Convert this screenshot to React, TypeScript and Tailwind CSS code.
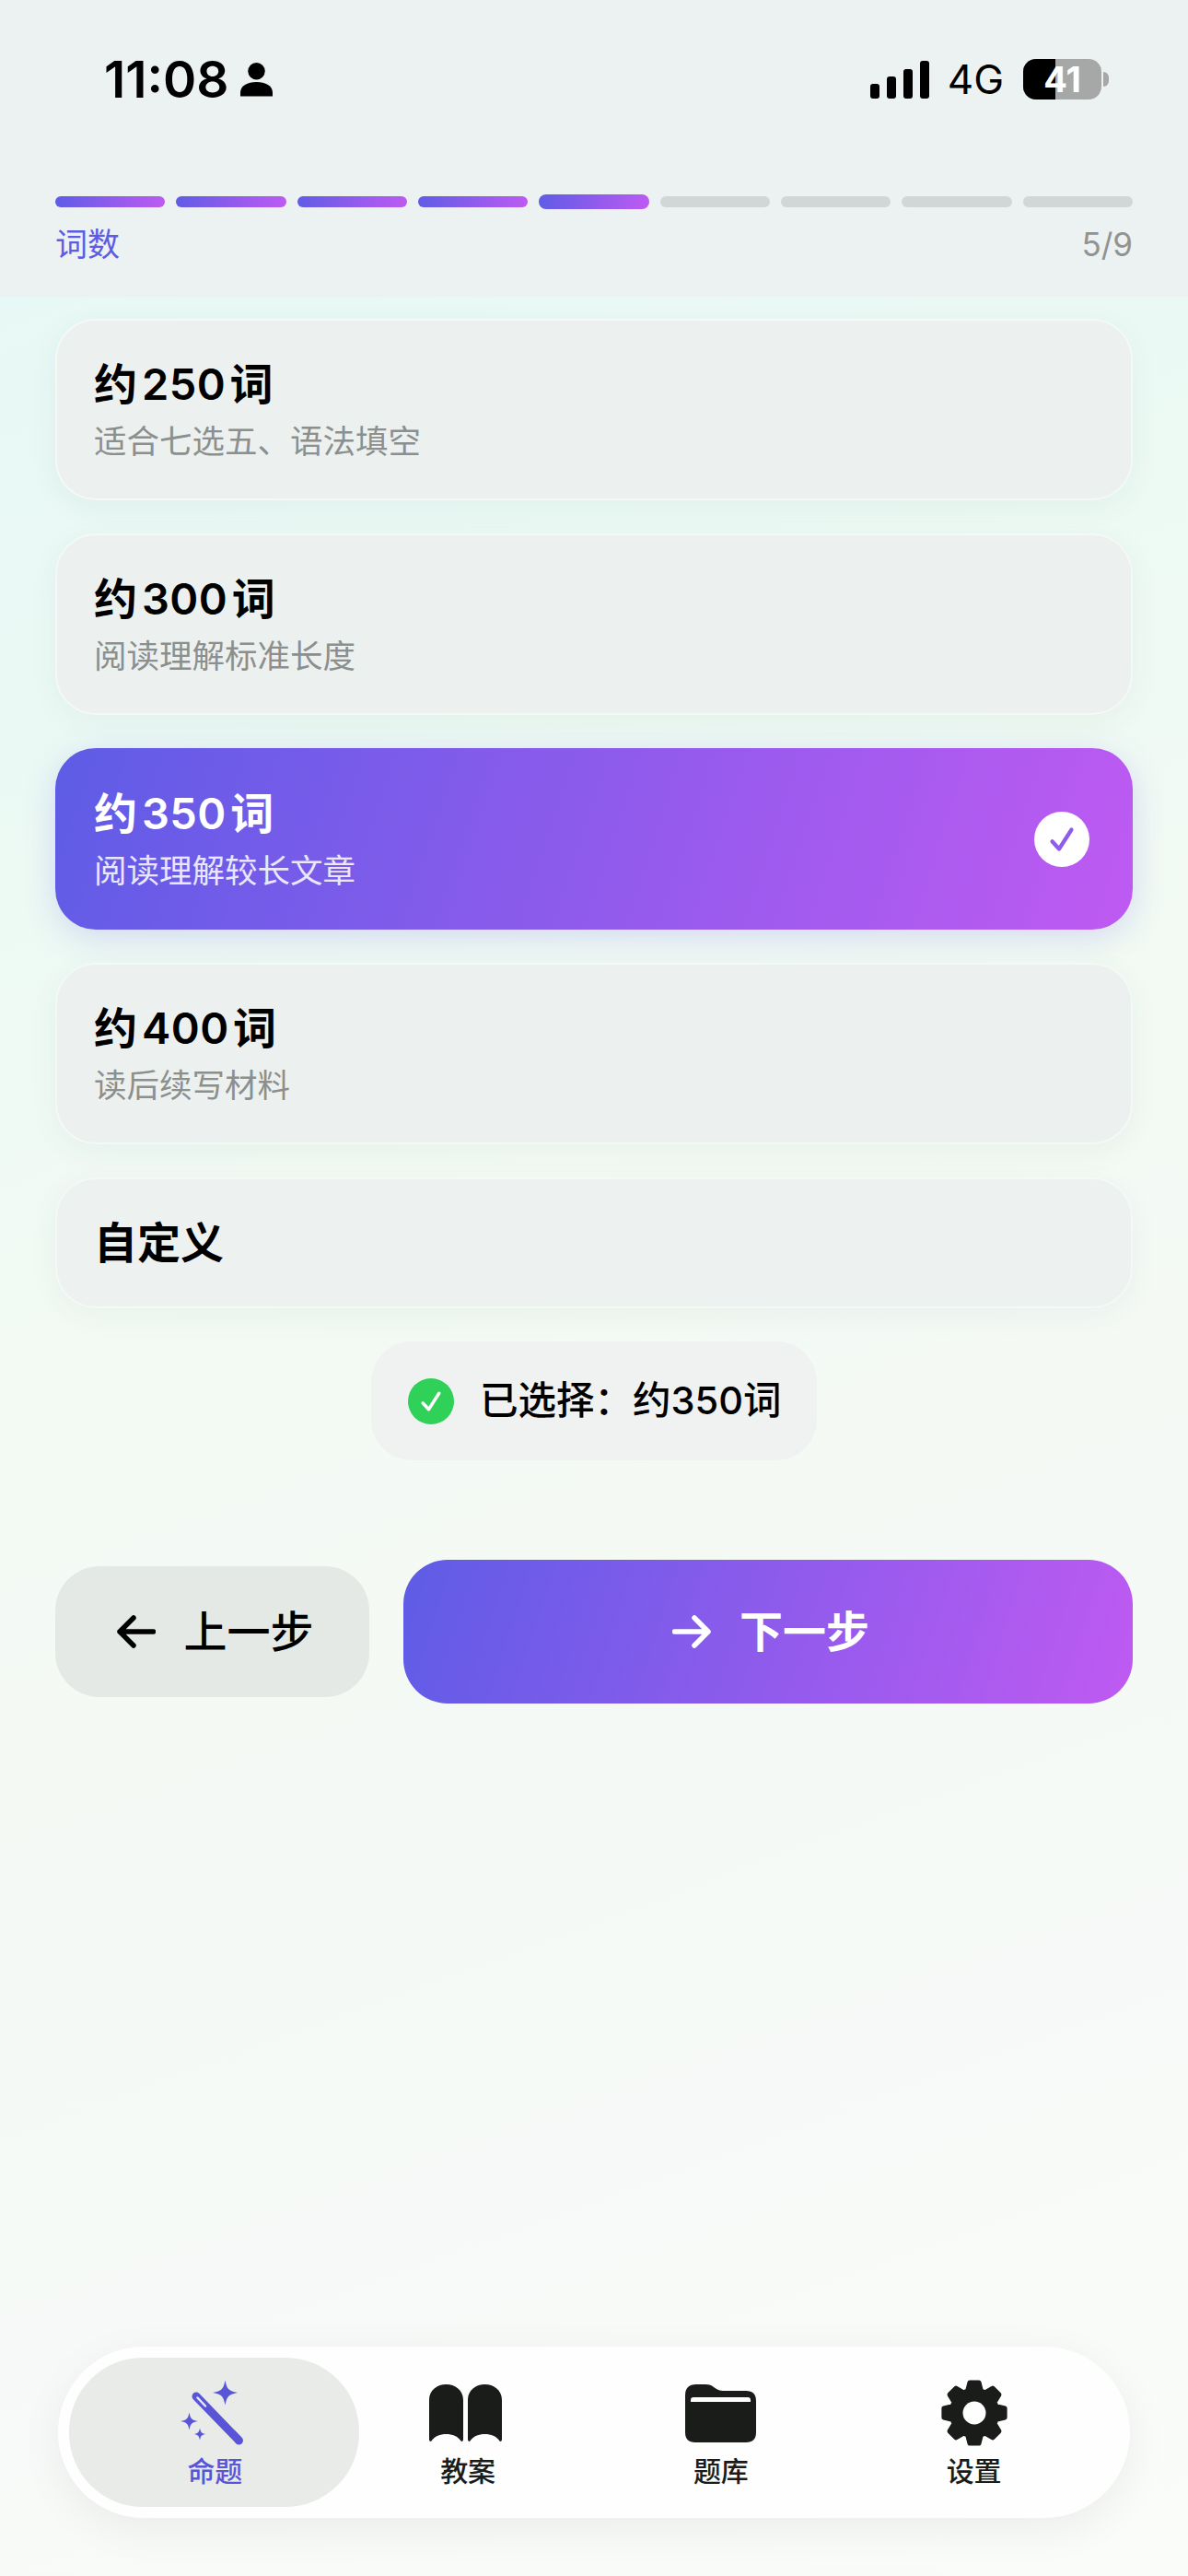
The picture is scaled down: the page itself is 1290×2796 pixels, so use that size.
import type { ReactNode } from 'react';

const brandGradient = 'bg-[linear-gradient(108deg,#5e5ce6,#bf5af2)]';

const options = [
  { title: '约\u200a250\u200a词', note: '适合七选五、语法填空' },
  { title: '约\u200a300\u200a词', note: '阅读理解标准长度' },
  { title: '约\u200a350\u200a词', note: '阅读理解较长文章', selected: true },
  { title: '约\u200a400\u200a词', note: '读后续写材料' },
];

function sparkle(cx: number, cy: number, r: number) {
  const k = r * 0.14;
  return `M${cx} ${cy - r}C${cx + k} ${cy - k * 2} ${cx + k * 2} ${cy - k} ${cx + r} ${cy}C${cx + k * 2} ${cy + k} ${cx + k} ${cy + k * 2} ${cx} ${cy + r}C${cx - k} ${cy + k * 2} ${cx - k * 2} ${cy + k} ${cx - r} ${cy}C${cx - k * 2} ${cy - k} ${cx - k} ${cy - k * 2} ${cx} ${cy - r}Z`;
}

function gearPath() {
  const points: string[] = [];
  for (let i = 0; i < 8; i++) {
    const a = (i * Math.PI) / 4 - Math.PI / 2;
    const at = (r: number, da: number) => `${(36 + r * Math.cos(a + da)).toFixed(2)} ${(36 + r * Math.sin(a + da)).toFixed(2)}`;
    points.push(at(25, -0.3), at(33.5, -0.15), at(33.5, 0.15), at(25, 0.3));
  }
  return `M${points.join('L')}Z`;
}

function WandIcon() {
  return (
    <svg aria-hidden="true" width="72" height="72" viewBox="0 0 72 72" className="-translate-x-[3px] text-[#5856d6]">
      <path d={sparkle(50.5, 14, 13.5)} fill="currentColor" />
      <path d={sparkle(11.5, 45, 9.5)} fill="currentColor" />
      <path d={sparkle(23, 59, 6.5)} fill="currentColor" />
      <path d="M19 18 65.5 66" stroke="currentColor" strokeWidth="9" strokeLinecap="round" />
      <path d="M20.5 19.5 29 28.5" stroke="#e9ebe9" strokeWidth="2.5" strokeLinecap="round" />
    </svg>
  );
}

function BookIcon() {
  const page = 'C0 6 9 0 18.5 0C28 0 37 6 37 17V60Q37 62 35 62C31 56 25 54 18.5 54C12 54 6 56 2 62Q0 62 0 60Z';
  return (
    <svg aria-hidden="true" width="79" height="62" viewBox="0 0 79 62" fill="#1a1c1a" className="-translate-x-[3px]">
      <path d={`M0 17${page}`} />
      <path d={`M0 17${page}`} transform="translate(42 0)" />
    </svg>
  );
}

function FolderIcon() {
  return (
    <svg aria-hidden="true" width="77" height="63" viewBox="0 0 77 63">
      <path
        d="M0 12Q0 0 12 0H22Q28 0 31 3L34 5Q37 7 41 7H66Q77 7 77 18V52Q77 63 66 63H11Q0 63 0 52Z"
        fill="#1a1c1a"
      />
      <path d="M6 19V17Q6 14 9 14H68Q71 14 71 17V19Z" fill="#fdfefd" />
    </svg>
  );
}

function GearIcon() {
  return (
    <svg aria-hidden="true" width="72" height="72" viewBox="0 0 72 72">
      <path d={gearPath()} fill="#1a1c1a" stroke="#1a1c1a" strokeWidth="5" strokeLinejoin="round" />
      <circle cx="36" cy="36" r="12.5" fill="#fdfefd" />
    </svg>
  );
}

function Check({ size, color, width }: { size: number; color: string; width: number }) {
  return (
    <svg aria-hidden="true" width={size} height={size} viewBox="0 0 24 24" fill="none">
      <path d="M5 13.5 10 19 19 5" stroke={color} strokeWidth={width} strokeLinecap="round" strokeLinejoin="round" />
    </svg>
  );
}

function Arrow({ flip, color }: { flip?: boolean; color: string }) {
  return (
    <svg aria-hidden="true" width="42" height="36" viewBox="0 0 42 36" fill="none" className={flip ? 'rotate-180' : ''}>
      <path
        d="M39.5 18H3M18 3 3 18 18 33"
        stroke={color}
        strokeWidth="5.5"
        strokeLinecap="round"
        strokeLinejoin="round"
      />
    </svg>
  );
}

function StatusBar() {
  return (
    <div className="flex h-[44px] items-center justify-between pl-[113px] pr-[86px] text-black">
      <div className="flex items-center gap-[12px]">
        <span className="text-[55px] font-semibold leading-none">11:08</span>
        <svg aria-hidden="true" width="35" height="38" viewBox="0 0 36 38">
          <circle cx="18" cy="10" r="9.5" />
          <path d="M0 38V34C0 26 8 22 18 22S36 26 36 34V38Z" />
        </svg>
      </div>
      <div className="flex items-center">
        <div className="flex h-[41px] items-end gap-2">
          <span className="h-[16px] w-[10px] rounded-[3px] bg-black" />
          <span className="h-[24px] w-[10px] rounded-[3px] bg-black" />
          <span className="h-[32px] w-[10px] rounded-[3px] bg-black" />
          <span className="h-[41px] w-[10px] rounded-[3px] bg-black" />
        </div>
        <span className="ml-[20px] text-[44px] font-normal leading-none">4G</span>
        <div className="relative ml-[21px] flex h-[44px] w-[85px] overflow-hidden rounded-[14px] bg-[#a5a8a7]">
          <div className="h-full w-[35px] bg-black" />
          <span className="absolute inset-0 flex items-center justify-center text-[38px] font-bold leading-none text-white">
            41
          </span>
        </div>
        <div className="ml-[2px] h-[16px] w-[6px] rounded-r-full bg-[#a5a8a7]" />
      </div>
    </div>
  );
}

function Progress() {
  return (
    <div className="mt-[103px] px-[60px]">
      <div className="flex h-4 items-center gap-3">
        {Array.from({ length: 9 }, (_, i) => (
          <div
            key={i}
            className={
              i < 4
                ? `h-3 flex-1 rounded-full ${brandGradient}`
                : i === 4
                  ? `h-4 flex-1 rounded-full ${brandGradient}`
                  : 'h-3 flex-1 rounded-full bg-[#d1d6d6]'
            }
          />
        ))}
      </div>
      <div className="mt-[15px] flex items-center justify-between text-[35px] leading-[46px]">
        <span className="text-[#5e5ce6]">词数</span>
        <span className="text-[#8f9493]">5/9</span>
      </div>
    </div>
  );
}

function OptionCard({ title, note, selected }: { title: string; note: string; selected?: boolean }) {
  return (
    <div
      className={
        selected
          ? `flex h-[197px] items-center justify-between rounded-[44px] pl-[42px] pr-[47px] shadow-[0_8px_36px_rgba(94,92,230,0.2)] ${brandGradient}`
          : 'flex h-[197px] items-center rounded-[44px] border-2 border-[#f4f8f6] bg-[#ecf1f0] pl-[40px] shadow-[0_8px_32px_rgba(40,70,70,0.05)]'
      }
    >
      <div>
        <div className={`text-[47px] font-semibold leading-[60px] tracking-[0.5px] ${selected ? 'text-white' : 'text-black'}`}>
          {title}
        </div>
        <div className={`mt-[10px] text-[35.5px] leading-[46px] ${selected ? 'text-white/85' : 'text-[#8b8f8e]'}`}>{note}</div>
      </div>
      {selected ? (
        <div className="flex h-[60px] w-[60px] items-center justify-center rounded-full bg-white">
          <Check size={36} color="#8f5bec" width={2.8} />
        </div>
      ) : null}
    </div>
  );
}

function NavItem({ label, icon, active }: { label: string; icon: ReactNode; active?: boolean }) {
  return (
    <div className="relative flex flex-col items-center pt-[36px]">
      {active ? <div className="absolute -left-[21px] -right-[19px] bottom-3 top-3 rounded-[80px] bg-[#e9ebe9]" /> : null}
      <div className="relative flex h-[72px] items-center justify-center">{icon}</div>
      <span
        className={`relative mt-[7px] text-[30px] font-medium leading-[40px] ${active ? 'text-[#5856d6]' : 'text-[#1a1c1a]'}`}
      >
        {label}
      </span>
    </div>
  );
}

export default function App() {
  return (
    <div className="flex h-[2796px] w-[1290px] flex-col overflow-hidden bg-[linear-gradient(160deg,#e4f8f6_0%,#ebf9f4_25%,#f2faf3_45%,#f5f9f5_62%,#f6f9f7_78%,#fafcf9_100%)] font-[Inter,'Noto_Sans_CJK_SC',sans-serif]">
      <header className="h-[322px] bg-[#ecf1f1] pt-[64px]">
        <StatusBar />
        <Progress />
      </header>

      <main className="flex flex-col px-[60px] pt-[24px]">
        <div className="flex flex-col gap-[36px]">
          {options.map((option) => (
            <OptionCard key={option.title} {...option} />
          ))}
          <div className="flex h-[142px] items-center rounded-[44px] border-2 border-[#f4f8f6] bg-[#edf2f0] pl-[40px] text-[47px] font-semibold text-black shadow-[0_8px_32px_rgba(40,70,70,0.05)]">
            自定义
          </div>
        </div>

        <div className="mt-[36px] flex justify-center">
          <div className="flex h-[129px] w-[484px] items-center gap-[28px] rounded-[44px] bg-[#eff2f0] pl-[40px]">
            <div className="flex h-[50px] w-[50px] items-center justify-center rounded-full bg-[#30d158]">
              <Check size={30} color="#ffffff" width={2.8} />
            </div>
            <span className="text-[41.5px] font-medium text-black">已选择：约350词</span>
          </div>
        </div>

        <div className="mt-[108px] flex items-center gap-[37px]">
          <div className="flex h-[142px] w-[341px] items-center justify-center gap-[31px] rounded-[48px] bg-[#e5e9e6] pl-[6px] text-[47px] font-medium text-black">
            <Arrow color="#000000" />
            上一步
          </div>
          <div
            className={`flex h-[156px] flex-1 items-center justify-center gap-[31px] rounded-[48px] pl-[6px] text-[47px] font-semibold text-white ${brandGradient}`}
          >
            <Arrow flip color="#ffffff" />
            下一步
          </div>
        </div>
      </main>

      <nav className="mx-[63px] mb-[63px] mt-auto grid h-[186px] grid-cols-4 rounded-[93px] bg-[#fdfefd] pl-[33px] pr-[32px] shadow-[0_12px_48px_rgba(0,0,0,0.06)]">
        <NavItem label="命题" icon={<WandIcon />} active />
        <NavItem label="教案" icon={<BookIcon />} />
        <NavItem label="题库" icon={<FolderIcon />} />
        <NavItem label="设置" icon={<GearIcon />} />
      </nav>
    </div>
  );
}
